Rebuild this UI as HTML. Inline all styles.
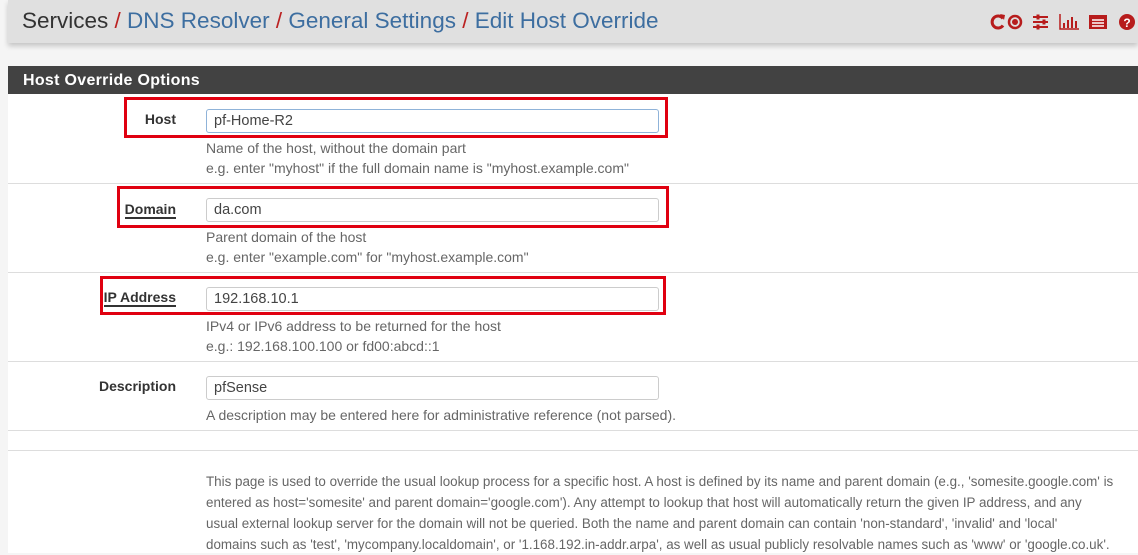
<!DOCTYPE html>
<html><head><meta charset="utf-8"><style>
*{margin:0;padding:0;box-sizing:border-box}
body{width:1138px;height:553px;overflow:hidden;background:#f5f5f5;font-family:"Liberation Sans",sans-serif;position:relative}
.hdr{position:absolute;left:8px;top:0;width:1130px;height:43px;background:#e0e0e0;box-shadow:0 3px 5px rgba(0,0,0,.2)}
.bc{position:absolute;left:14px;top:8px;font-size:22.5px;color:#333;white-space:nowrap;letter-spacing:0}
.bc a{color:#3d6ea0}.bc .s{color:#b22}
.ph{position:absolute;left:8px;top:66px;width:1130px;height:28px;background:#424242;color:#fff;font-size:16px;font-weight:bold;padding:6px 0 0 15px;letter-spacing:.3px}
.pb{position:absolute;left:8px;top:94px;width:1130px;height:459px;background:#fff}
.line{position:absolute;left:8px;width:1130px;height:1px;background:#ddd}
.lbl{position:absolute;font-size:14px;font-weight:bold;color:#333;text-align:right;width:176px;left:0}
.inp{position:absolute;left:206px;width:453px;height:24px;border:1px solid #ccc;border-radius:3px;font-size:14.5px;color:#444;padding:3px 0 0 7px}
.help{position:absolute;left:206px;font-size:14px;color:#666;line-height:20px;white-space:nowrap}
.red{position:absolute;border:3px solid #e00010}
</style></head><body>
<div class="hdr"><div class="bc">Services<span class="s"> / </span><a>DNS Resolver</a><span class="s"> / </span><a>General Settings</a><span class="s"> / </span><a>Edit Host Override</a></div></div>
<svg style="position:absolute;left:985px;top:10px" width="153" height="24" viewBox="0 0 153 24">
<path d="M18 8.5A6 6 0 1 0 18 15.5" fill="none" stroke="#b71c1c" stroke-width="3"/>
<path d="M15 4l5 1-1 5z" fill="#b71c1c"/>
<circle cx="30" cy="12" r="6" fill="none" stroke="#b71c1c" stroke-width="2.5"/>
<circle cx="30" cy="12" r="3" fill="#b71c1c"/>
<g stroke="#b71c1c" stroke-width="2"><path d="M48 7h15M48 12h15M48 17h15"/><path d="M53 4.5v5M59 9.5v5M53 14.5v5" stroke-width="3"/></g>
<g stroke="#b71c1c" stroke-width="1.5" fill="none"><path d="M75 4v15h19"/></g>
<g stroke="#b71c1c" stroke-width="2"><path d="M79 18v-5M83 18v-8M87 18v-11M91 18v-7"/></g>
<rect x="104" y="5" width="18" height="14" fill="#b71c1c"/><g stroke="#fff" stroke-width="1.5"><path d="M107 10h12M107 13h12M107 16h12"/></g>
<circle cx="142" cy="12" r="8" fill="#b71c1c"/><text x="142" y="17" fill="#fff" font-size="12" font-weight="bold" text-anchor="middle" font-family="Liberation Sans">?</text>
</svg>
<div class="ph">Host Override Options</div>
<div class="pb"></div>
<div class="line" style="top:183px"></div>
<div class="line" style="top:272px"></div>
<div class="line" style="top:361px"></div>
<div class="line" style="top:430px"></div>
<div class="line" style="top:450px"></div>

<div class="lbl" style="top:111px">Host</div>
<div class="inp" style="top:109px;border-color:#8fb3d9">pf-Home-R2</div>
<div class="help" style="top:138px">Name of the host, without the domain part<br>e.g. enter "myhost" if the full domain name is "myhost.example.com"</div>

<div class="lbl" style="top:201px"><span style="border-bottom:2px solid #333">Domain</span></div>
<div class="inp" style="top:198px">da.com</div>
<div class="help" style="top:227px">Parent domain of the host<br>e.g. enter "example.com" for "myhost.example.com"</div>

<div class="lbl" style="top:289px"><span style="border-bottom:2px solid #333">IP Address</span></div>
<div class="inp" style="top:287px">192.168.10.1</div>
<div class="help" style="top:316px">IPv4 or IPv6 address to be returned for the host<br>e.g.: 192.168.100.100 or fd00:abcd::1</div>

<div class="lbl" style="top:378px">Description</div>
<div class="inp" style="top:376px">pfSense</div>
<div class="help" style="top:405px">A description may be entered here for administrative reference (not parsed).</div>

<div class="help" style="top:471px;line-height:21px;font-size:13.4px">This page is used to override the usual lookup process for a specific host. A host is defined by its name and parent domain (e.g., 'somesite.google.com' is<br>entered as host='somesite' and parent domain='google.com'). Any attempt to lookup that host will automatically return the given IP address, and any<br>usual external lookup server for the domain will not be queried. Both the name and parent domain can contain 'non-standard', 'invalid' and 'local'<br>domains such as 'test', 'mycompany.localdomain', or '1.168.192.in-addr.arpa', as well as usual publicly resolvable names such as 'www' or 'google.co.uk'.</div>

<div class="red" style="left:124px;top:97px;width:544px;height:41px"></div>
<div class="red" style="left:117px;top:186px;width:552px;height:42px"></div>
<div class="red" style="left:100px;top:276px;width:566px;height:39px"></div>
</body></html>
